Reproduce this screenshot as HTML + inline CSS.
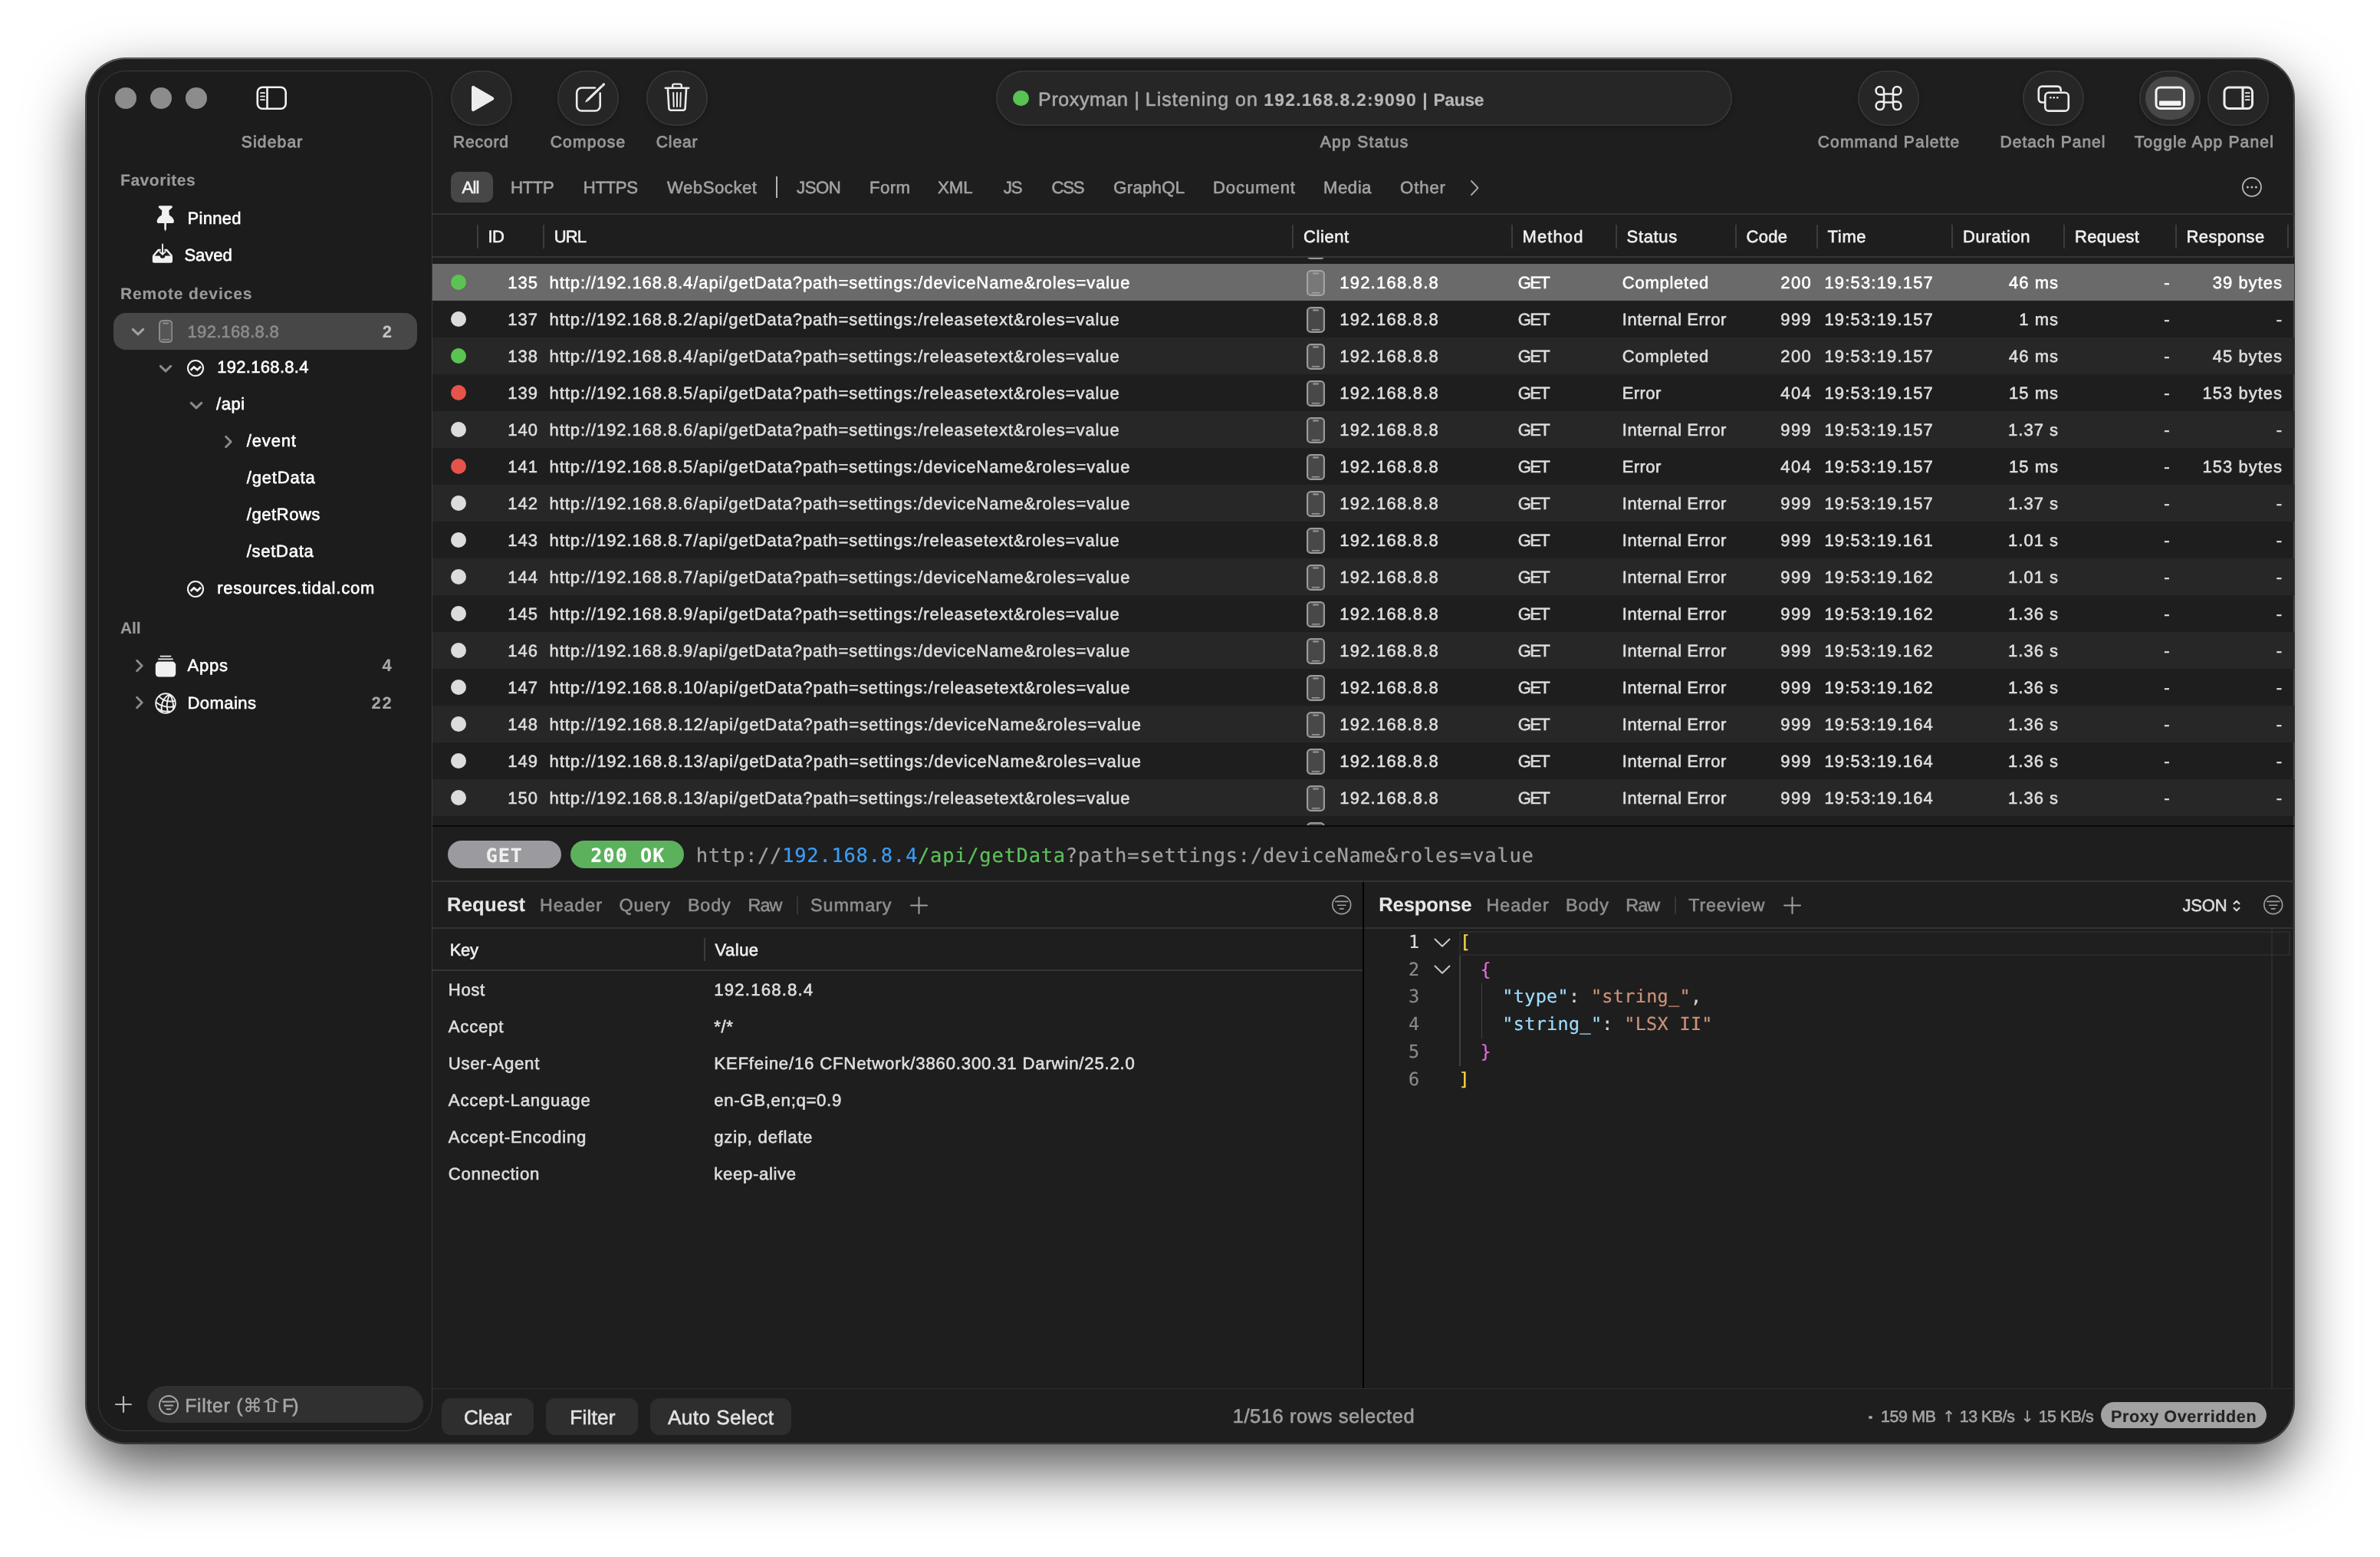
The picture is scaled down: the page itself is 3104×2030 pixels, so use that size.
<!DOCTYPE html>
<html lang="en"><head><meta charset="utf-8"><title>Proxyman</title>
<style>
html,body{margin:0;padding:0;background:#fff;}
body{width:3104px;height:2030px;position:relative;overflow:hidden;font-family:"Liberation Sans",sans-serif;}
#app div,#app span,#app svg{position:absolute;}
#app{text-rendering:geometricPrecision;will-change:transform;}
#app span{white-space:pre;-webkit-text-stroke:0.6px;}

.win{left:112px;top:76px;width:2880px;height:1806px;background:#1e1e1e;border-radius:52px;
 box-shadow:0 0 0 1px rgba(0,0,0,.7),0 34px 77px rgba(0,0,0,.66);}
.winhl{left:112px;top:76px;width:2878px;height:1804px;border-radius:52px;border:1px solid rgba(255,255,255,.2);border-top-color:rgba(255,255,255,.34);}
.side{left:128px;top:92px;width:434px;height:1772px;background:#1c1c1c;border-radius:36px;border:1px solid #3b3b3b;}

</style></head><body><div id="app">
<div class="win"></div><div class="winhl"></div>
<div class="side"></div>
<div style="left:150px;top:114px;width:28px;height:28px;background:#8c8c8c;border-radius:14px;"></div>
<div style="left:196px;top:114px;width:28px;height:28px;background:#8c8c8c;border-radius:14px;"></div>
<div style="left:242px;top:114px;width:28px;height:28px;background:#8c8c8c;border-radius:14px;"></div>
<svg style="left:334px;top:112px;" width="41" height="32" viewBox="0 0 41 32" fill="none"><rect x="1.800" y="1.800" width="36.900" height="27.900" rx="6.500" stroke="#f2f2f2" stroke-width="2.600"/><path d="M14.500 2v28" stroke="#f2f2f2" stroke-width="2.600"/><path d="M6 9.2h5M6 13.7h5M6 18.2h5" stroke="#f2f2f2" stroke-width="1.8" stroke-linecap="round"/></svg>
<span style="left:314.8px;top:172px;font-size:21px;line-height:27px;color:#9a9a9a;letter-spacing:1.18px;-webkit-text-stroke:0.85px;">Sidebar</span>
<span style="left:157.0px;top:222px;font-size:21px;line-height:27px;color:#9a9a9a;font-weight:700;letter-spacing:0.55px;-webkit-text-stroke:0.15px;">Favorites</span>
<span style="left:157.0px;top:370px;font-size:21px;line-height:27px;color:#9a9a9a;font-weight:700;letter-spacing:0.89px;-webkit-text-stroke:0.15px;">Remote devices</span>
<span style="left:157.0px;top:806px;font-size:21px;line-height:27px;color:#9a9a9a;font-weight:700;letter-spacing:-0.17px;-webkit-text-stroke:0.15px;">All</span>
<svg style="left:203px;top:267px;" width="26" height="37" viewBox="0 0 26 37" fill="none"><path d="M5.500 1.300H20.300Q21.900 1.300 21.900 2.700Q21.900 3.500 21.200 4.100L17.300 7.400L17.800 13.600Q23.900 17 23.900 22Q23.900 23.900 22 23.900H3.600Q1.700 23.900 1.700 22Q1.700 17 7.800 13.600L8.300 7.400L4.400 4.100Q3.700 3.500 3.700 2.700Q3.700 1.300 5.500 1.300Z" fill="#f0f0f0"/><path d="M11.300 23.500h2.600v8l-1.300 3.200-1.300-3.200z" fill="#f0f0f0"/></svg>
<span style="left:244.6px;top:270px;font-size:22px;line-height:29px;color:#ffffff;letter-spacing:0.3px;">Pinned</span>
<svg style="left:197px;top:316px;" width="30" height="30" viewBox="0 0 30 30" fill="none"><path d="M1.800 17.500H11.700A3.300 3.300 0 0 0 18.300 17.500H28V24.300Q28 26.800 25.500 26.800H4.300Q1.800 26.800 1.800 24.300Z" fill="#f0f0f0"/><path d="M2.900 17.800L9.700 9.900H12.600M17.400 9.900H20.300L27.100 17.800" stroke="#f0f0f0" stroke-width="2.400" stroke-linejoin="round" stroke-linecap="butt" fill="none"/><path d="M15 2.400V15.300M11.300 12.100L15 15.800L18.700 12.100" stroke="#f0f0f0" stroke-width="1.900" stroke-linecap="round" stroke-linejoin="round" fill="none"/></svg>
<span style="left:240.4px;top:318px;font-size:22px;line-height:29px;color:#ffffff;letter-spacing:-0.02px;">Saved</span>
<div style="left:148px;top:408px;width:396px;height:48px;background:#474747;border-radius:16px;"></div>
<svg style="left:169px;top:425px;" width="22" height="16" viewBox="0 0 22 16" fill="none"><path d="M4.300 4.400l6.700 6.500 6.700-6.500" stroke="#a2a2a2" stroke-width="3" stroke-linecap="round" stroke-linejoin="round"/></svg>
<svg style="left:207px;top:417.2px;" width="18.4" height="30" viewBox="0 0 18.4 30" fill="none"><rect x="1" y="1" width="16.4" height="28" rx="4.500" fill="#565656" stroke="#8c8c8c" stroke-width="2"/><path d="M6.2 4.6h6" stroke="#8c8c8c" stroke-width="2" stroke-linecap="round"/><path d="M4.7 25.8h9" stroke="#8c8c8c" stroke-width="1.600" stroke-linecap="round"/></svg>
<span style="left:244.6px;top:418px;font-size:22px;line-height:29px;color:#8c8c8c;letter-spacing:0.29px;">192.168.8.8</span>
<span style="left:498.8px;top:418px;font-size:22px;line-height:29px;color:#c6c6c6;font-weight:700;-webkit-text-stroke:0.15px;">2</span>
<svg style="left:205px;top:472.5px;" width="22" height="16" viewBox="0 0 22 16" fill="none"><path d="M4.300 4.400l6.700 6.500 6.700-6.500" stroke="#8a8a8a" stroke-width="3" stroke-linecap="round" stroke-linejoin="round"/></svg>
<svg style="left:243px;top:468.3px;" width="24" height="24" viewBox="0 0 24 24" fill="none"><circle cx="12" cy="12" r="10" stroke="#f0f0f0" stroke-width="2.100"/><path d="M5.600 14.700L9.900 10.600L14.400 14.200L18.900 9.700" stroke="#f0f0f0" stroke-width="2.800" stroke-linejoin="miter" fill="none"/></svg>
<span style="left:283.2px;top:464px;font-size:22px;line-height:29px;color:#ffffff;letter-spacing:0.31px;">192.168.8.4</span>
<svg style="left:245px;top:520.7px;" width="22" height="16" viewBox="0 0 22 16" fill="none"><path d="M4.300 4.400l6.700 6.500 6.700-6.500" stroke="#8a8a8a" stroke-width="3" stroke-linecap="round" stroke-linejoin="round"/></svg>
<span style="left:282.1px;top:512px;font-size:22px;line-height:29px;color:#ffffff;letter-spacing:0.54px;">/api</span>
<svg style="left:290px;top:564.5px;" width="16" height="22" viewBox="0 0 16 22" fill="none"><path d="M4.600 4.300l6.600 6.700-6.600 6.700" stroke="#8a8a8a" stroke-width="3" stroke-linecap="round" stroke-linejoin="round"/></svg>
<span style="left:321.8px;top:560px;font-size:22px;line-height:29px;color:#ffffff;letter-spacing:0.85px;">/event</span>
<span style="left:321.8px;top:608px;font-size:22px;line-height:29px;color:#ffffff;letter-spacing:0.83px;">/getData</span>
<span style="left:321.8px;top:656px;font-size:22px;line-height:29px;color:#ffffff;letter-spacing:0.55px;">/getRows</span>
<span style="left:321.8px;top:704px;font-size:22px;line-height:29px;color:#ffffff;letter-spacing:0.71px;">/setData</span>
<svg style="left:243px;top:755.8px;" width="24" height="24" viewBox="0 0 24 24" fill="none"><circle cx="12" cy="12" r="10" stroke="#f0f0f0" stroke-width="2.100"/><path d="M5.600 14.700L9.900 10.600L14.400 14.200L18.900 9.700" stroke="#f0f0f0" stroke-width="2.800" stroke-linejoin="miter" fill="none"/></svg>
<span style="left:283.2px;top:752px;font-size:22px;line-height:29px;color:#ffffff;letter-spacing:0.8px;">resources.tidal.com</span>
<svg style="left:173.7px;top:856.6px;" width="16" height="22" viewBox="0 0 16 22" fill="none"><path d="M4.600 4.300l6.600 6.700-6.600 6.700" stroke="#8a8a8a" stroke-width="3" stroke-linecap="round" stroke-linejoin="round"/></svg>
<svg style="left:201px;top:853px;" width="30" height="31" viewBox="0 0 30 31" fill="none"><path d="M8.300 2.600h13.400" stroke="#f0f0f0" stroke-width="1.600" stroke-linecap="round"/><path d="M6 6.300h18" stroke="#f0f0f0" stroke-width="1.800" stroke-linecap="round"/><rect x="1.800" y="9.600" width="26.400" height="20" rx="4.500" fill="#f0f0f0"/></svg>
<span style="left:244.5px;top:853px;font-size:22px;line-height:29px;color:#ffffff;letter-spacing:0.75px;">Apps</span>
<span style="left:498.6px;top:853px;font-size:22px;line-height:29px;color:#a8a8a8;font-weight:700;-webkit-text-stroke:0.15px;">4</span>
<svg style="left:173.7px;top:904.6px;" width="16" height="22" viewBox="0 0 16 22" fill="none"><path d="M4.600 4.300l6.600 6.700-6.600 6.700" stroke="#8a8a8a" stroke-width="3" stroke-linecap="round" stroke-linejoin="round"/></svg>
<svg style="left:201px;top:902px;" width="30" height="30" viewBox="0 0 30 30" fill="none"><g stroke="#f0f0f0" stroke-width="1.900" fill="none"><circle cx="15" cy="15" r="12.800"/><g transform="rotate(14 15 15)"><path d="M17.500 2.400C10 8 8.500 19 13.500 27.600M17.500 2.400C15.500 10 16.500 20 21.500 26M17.500 2.400C22.500 7 25.500 13 26.500 20.500"/><path d="M4.500 8.500C11 12.500 19 12.500 26.200 9M2.300 16.500C10 20.500 20 20 27.700 16M6 24C11 26 18 26 24 23.500"/></g></g></svg>
<span style="left:244.5px;top:902px;font-size:22px;line-height:29px;color:#ffffff;letter-spacing:0.43px;">Domains</span>
<span style="left:484.6px;top:902px;font-size:22px;line-height:29px;color:#a8a8a8;font-weight:700;letter-spacing:1.72px;-webkit-text-stroke:0.15px;">22</span>
<svg style="left:148px;top:1818px;" width="26" height="26" viewBox="0 0 26 26" fill="none"><path d="M13 3v20M3 13h20" stroke="#b4b4b4" stroke-width="2.200" stroke-linecap="round"/></svg>
<div style="left:192px;top:1807px;width:360px;height:48px;background:#303030;border-radius:24px;"></div>
<svg style="left:205.7px;top:1818px;" width="28" height="28" viewBox="0 0 28 28" fill="none"><circle cx="14" cy="14" r="12" stroke="#a8a8a8" stroke-width="2"/><path d="M5.94 9.58h16.12M8.8 14.52h10.4M11.66 19.2h4.68" stroke="#a8a8a8" stroke-width="2" stroke-linecap="round"/></svg>
<span style="left:241.2px;top:1818px;font-size:24.8px;line-height:32px;color:#a6a6a6;letter-spacing:0.71px;">Filter (</span>
<span style="left:317.3px;top:1817px;font-size:24.5px;line-height:32px;color:#a6a6a6;font-family:'DejaVu Sans', sans-serif;-webkit-text-stroke:0.2px;">⌘</span>
<span style="left:336.4px;top:1817px;font-size:25px;line-height:32px;color:#a6a6a6;font-family:'DejaVu Sans', sans-serif;-webkit-text-stroke:0.2px;transform:scaleX(1.7);transform-origin:0 50%;">⇧</span>
<span style="left:367.9px;top:1818px;font-size:24.8px;line-height:32px;color:#a6a6a6;letter-spacing:-1.81px;">F)</span>
<div style="left:587.8px;top:92px;width:80px;height:72px;border-radius:36px;background:#262626;box-shadow:inset 0 0 0 1.5px #393939,0 2px 6px rgba(0,0,0,.25);"></div>
<svg style="left:610px;top:106px;" width="40" height="44" viewBox="0 0 40 44" fill="none"><path d="M5 8.200c0-2 1.700-3 3.400-2l24.600 14.200c1.700 1 1.700 3.200 0 4.200L8.400 38.800c-1.700 1-3.400 0-3.400-2z" fill="#ececec"/></svg>
<span style="left:591.0px;top:172px;font-size:21px;line-height:27px;color:#989898;letter-spacing:0.86px;-webkit-text-stroke:0.85px;">Record</span>
<div style="left:727px;top:92px;width:80px;height:72px;border-radius:36px;background:#262626;box-shadow:inset 0 0 0 1.5px #393939,0 2px 6px rgba(0,0,0,.25);"></div>
<svg style="left:747px;top:104px;" width="46" height="46" viewBox="0 0 46 46" fill="none"><path d="M29 10.500H11.700a6.500 6.500 0 0 0-6.500 6.500V34a6.500 6.500 0 0 0 6.500 6.500h17.500a6.500 6.500 0 0 0 6.500-6.500V17.500" stroke="#ececec" stroke-width="2.600" stroke-linecap="round" fill="none"/><path d="M19.600 26.200L38.200 8.200" stroke="#ececec" stroke-width="3.200" stroke-linecap="butt"/><path d="M16 29.800l2.200-4.900 2.500 2.600z" fill="#ececec"/><path d="M39.400 7l1.100-1.100" stroke="#ececec" stroke-width="3.200" stroke-linecap="round"/></svg>
<span style="left:717.7px;top:172px;font-size:21px;line-height:27px;color:#989898;letter-spacing:1.25px;-webkit-text-stroke:0.85px;">Compose</span>
<div style="left:843px;top:92px;width:80px;height:72px;border-radius:36px;background:#262626;box-shadow:inset 0 0 0 1.5px #393939,0 2px 6px rgba(0,0,0,.25);"></div>
<svg style="left:864px;top:105px;" width="38" height="44" viewBox="0 0 38 44" fill="none"><g stroke="#ececec" stroke-linecap="round" fill="none"><path d="M3.800 9.800h30.400" stroke-width="2.600"/><path d="M13.200 9.500V6.600c0-1.300.8-2 2.100-2h7.400c1.300 0 2.100.7 2.100 2v2.900" stroke-width="2.400"/><path d="M6.900 10.500l1.500 25.500c.1 1.800 1.100 2.800 2.900 2.800h15.400c1.800 0 2.800-1 2.900-2.800l1.500-25.500" stroke-width="2.600" stroke-linejoin="round"/><path d="M14.200 16l.5 18M19 16v18M23.800 16l-.5 18" stroke-width="2"/></g></svg>
<span style="left:855.8px;top:172px;font-size:21px;line-height:27px;color:#989898;letter-spacing:0.9px;-webkit-text-stroke:0.85px;">Clear</span>
<div style="left:1299px;top:92px;width:960px;height:72px;border-radius:36px;background:#262626;box-shadow:inset 0 0 0 1.5px #393939,0 2px 6px rgba(0,0,0,.25);"></div>
<div style="left:1321px;top:117.7px;width:20.6px;height:20.6px;background:#58c354;border-radius:11px;"></div>
<span style="left:1354.1px;top:114px;font-size:25px;line-height:32px;color:#a8a8a8;letter-spacing:0.61px;">Proxyman</span>
<span style="left:1479.6px;top:114px;font-size:25px;line-height:32px;color:#a8a8a8;">|</span>
<span style="left:1493.8px;top:114px;font-size:25px;line-height:32px;color:#a8a8a8;letter-spacing:1.03px;">Listening on</span>
<span style="left:1648.2px;top:115px;font-size:22.9px;line-height:30px;color:#b6b6b6;font-weight:700;letter-spacing:1.27px;-webkit-text-stroke:0.15px;">192.168.8.2:9090</span>
<span style="left:1855.2px;top:115px;font-size:22.9px;line-height:30px;color:#b6b6b6;font-weight:700;-webkit-text-stroke:0.15px;">|</span>
<span style="left:1869.4px;top:115px;font-size:22.9px;line-height:30px;color:#b6b6b6;font-weight:700;letter-spacing:-0.31px;-webkit-text-stroke:0.15px;">Pause</span>
<span style="left:1721.8px;top:172px;font-size:21px;line-height:27px;color:#989898;letter-spacing:1.3px;-webkit-text-stroke:0.85px;">App Status</span>
<div style="left:2423px;top:92px;width:80px;height:72px;border-radius:36px;background:#262626;box-shadow:inset 0 0 0 1.5px #393939,0 2px 6px rgba(0,0,0,.25);"></div>
<svg style="left:2443px;top:109px;" width="40" height="38" viewBox="0 0 40 38" fill="none"><path d="M14 13.500h12v11H14zM14 13.500V9.200a5.200 5.200 0 1 0-5.200 5.200H14zM26 13.500V9.200a5.200 5.200 0 1 1 5.200 5.200H26zM14 24.500v4.300a5.200 5.200 0 1 1-5.200-5.200H14zM26 24.500v4.300a5.200 5.200 0 1 0 5.200-5.200H26z" stroke="#ececec" stroke-width="2.600" stroke-linejoin="round" fill="none" transform="translate(0,0)"/></svg>
<span style="left:2370.7px;top:172px;font-size:21px;line-height:27px;color:#989898;letter-spacing:1.18px;-webkit-text-stroke:0.85px;">Command Palette</span>
<div style="left:2638px;top:92px;width:80px;height:72px;border-radius:36px;background:#262626;box-shadow:inset 0 0 0 1.5px #393939,0 2px 6px rgba(0,0,0,.25);"></div>
<svg style="left:2656px;top:110px;" width="45" height="37" viewBox="0 0 45 37" fill="none"><g stroke="#ececec" stroke-width="2.600" fill="none"><path d="M10 23.500H7.500c-3 0-4.700-1.700-4.700-4.700V7.300c0-3 1.700-4.700 4.700-4.700h19.500c3 0 4.700 1.700 4.700 4.700v2"/><rect x="11.300" y="10.800" width="30.500" height="23.800" rx="4.700" fill="#262626"/></g><circle cx="18.300" cy="17.300" r="1.300" fill="#ececec"/><circle cx="22.800" cy="17.300" r="1.300" fill="#ececec"/><circle cx="27.300" cy="17.300" r="1.300" fill="#ececec"/></svg>
<span style="left:2608.6px;top:172px;font-size:21px;line-height:27px;color:#989898;letter-spacing:0.97px;-webkit-text-stroke:0.85px;">Detach Panel</span>
<div style="left:2790px;top:92px;width:80px;height:72px;border-radius:36px;background:#262626;box-shadow:inset 0 0 0 1.5px #393939,0 2px 6px rgba(0,0,0,.25);"></div>
<div style="left:2797.6px;top:99.5px;width:64.4px;height:56.5px;background:#484848;border-radius:28.2px;"></div>
<svg style="left:2810px;top:112px;" width="41" height="32" viewBox="0 0 41 32" fill="none"><rect x="2" y="2" width="36.500" height="27.500" rx="5.500" stroke="#f4f4f4" stroke-width="3"/><rect x="6" y="19.600" width="28.500" height="6.200" rx="1.200" fill="#f4f4f4"/></svg>
<div style="left:2879px;top:92px;width:80px;height:72px;border-radius:36px;background:#262626;box-shadow:inset 0 0 0 1.5px #393939,0 2px 6px rgba(0,0,0,.25);"></div>
<svg style="left:2898.5px;top:112px;" width="41" height="32" viewBox="0 0 41 32" fill="none"><rect x="2" y="2" width="36.500" height="27.500" rx="6" stroke="#ececec" stroke-width="3"/><path d="M26 2v28" stroke="#ececec" stroke-width="3"/><path d="M29.800 9.200h5M29.800 13.700h5M29.800 18.200h5" stroke="#ececec" stroke-width="1.800" stroke-linecap="round"/></svg>
<span style="left:2783.8px;top:172px;font-size:21px;line-height:27px;color:#989898;letter-spacing:1.17px;-webkit-text-stroke:0.85px;">Toggle App Panel</span>
<div style="left:588.3px;top:224.3px;width:54.6px;height:39.6px;background:#474747;border-radius:10px;"></div>
<span style="left:602.6px;top:230px;font-size:22.2px;line-height:29px;color:#f2f2f2;letter-spacing:-0.89px;">All</span>
<span style="left:666.0px;top:230px;font-size:22.2px;line-height:29px;color:#a2a2a2;letter-spacing:-0.41px;">HTTP</span>
<span style="left:760.8px;top:230px;font-size:22.2px;line-height:29px;color:#a2a2a2;letter-spacing:-0.38px;">HTTPS</span>
<span style="left:870.0px;top:230px;font-size:22.2px;line-height:29px;color:#a2a2a2;letter-spacing:0.49px;">WebSocket</span>
<div style="left:1012.3px;top:230.4px;width:2px;height:27.5px;background:#b4b4b4;"></div>
<span style="left:1039.0px;top:230px;font-size:22.2px;line-height:29px;color:#a2a2a2;letter-spacing:-0.46px;">JSON</span>
<span style="left:1134.0px;top:230px;font-size:22.2px;line-height:29px;color:#a2a2a2;letter-spacing:0.41px;">Form</span>
<span style="left:1222.9px;top:230px;font-size:22.2px;line-height:29px;color:#a2a2a2;letter-spacing:0.09px;">XML</span>
<span style="left:1308.8px;top:230px;font-size:22.2px;line-height:29px;color:#a2a2a2;letter-spacing:-1.11px;">JS</span>
<span style="left:1371.6px;top:230px;font-size:22.2px;line-height:29px;color:#a2a2a2;letter-spacing:-1.36px;">CSS</span>
<span style="left:1452.3px;top:230px;font-size:22.2px;line-height:29px;color:#a2a2a2;letter-spacing:0.24px;">GraphQL</span>
<span style="left:1582.0px;top:230px;font-size:22.2px;line-height:29px;color:#a2a2a2;letter-spacing:0.84px;">Document</span>
<span style="left:1726.0px;top:230px;font-size:22.2px;line-height:29px;color:#a2a2a2;letter-spacing:0.49px;">Media</span>
<span style="left:1826.0px;top:230px;font-size:22.2px;line-height:29px;color:#a2a2a2;letter-spacing:0.88px;">Other</span>
<svg style="left:1914px;top:232px;" width="18" height="26" viewBox="0 0 18 26" fill="none"><path d="M5 4l8.500 9L5 22" stroke="#a2a2a2" stroke-width="2" stroke-linecap="round" stroke-linejoin="round"/></svg>
<svg style="left:2922px;top:229px;" width="30" height="30" viewBox="0 0 30 30" fill="none"><circle cx="14.900" cy="14.900" r="12.100" stroke="#bdbdbd" stroke-width="1.700"/><circle cx="9.400" cy="14.900" r="1.500" fill="#bdbdbd"/><circle cx="14.900" cy="14.900" r="1.500" fill="#bdbdbd"/><circle cx="20.400" cy="14.900" r="1.500" fill="#bdbdbd"/></svg>
<div style="left:564px;top:278px;width:2428px;height:2px;background:#323232;"></div>
<div style="left:621.8px;top:292.5px;width:2px;height:31.5px;background:#3c3c3c;"></div>
<div style="left:707.9px;top:292.5px;width:2px;height:31.5px;background:#3c3c3c;"></div>
<div style="left:1684.8px;top:292.5px;width:2px;height:31.5px;background:#3c3c3c;"></div>
<div style="left:1971px;top:292.5px;width:2px;height:31.5px;background:#3c3c3c;"></div>
<div style="left:2107px;top:292.5px;width:2px;height:31.5px;background:#3c3c3c;"></div>
<div style="left:2263px;top:292.5px;width:2px;height:31.5px;background:#3c3c3c;"></div>
<div style="left:2369px;top:292.5px;width:2px;height:31.5px;background:#3c3c3c;"></div>
<div style="left:2545px;top:292.5px;width:2px;height:31.5px;background:#3c3c3c;"></div>
<div style="left:2691px;top:292.5px;width:2px;height:31.5px;background:#3c3c3c;"></div>
<div style="left:2837px;top:292.5px;width:2px;height:31.5px;background:#3c3c3c;"></div>
<div style="left:2982.7px;top:292.5px;width:2px;height:31.5px;background:#3c3c3c;"></div>
<span style="left:636.6px;top:294px;font-size:22px;line-height:29px;color:#f0f0f0;letter-spacing:-0.6px;">ID</span>
<span style="left:722.8px;top:294px;font-size:22px;line-height:29px;color:#f0f0f0;letter-spacing:-0.91px;">URL</span>
<span style="left:1699.9px;top:294px;font-size:22px;line-height:29px;color:#f0f0f0;letter-spacing:0.61px;">Client</span>
<span style="left:1985.6px;top:294px;font-size:22px;line-height:29px;color:#f0f0f0;letter-spacing:1.08px;">Method</span>
<span style="left:2121.6px;top:294px;font-size:22px;line-height:29px;color:#f0f0f0;letter-spacing:0.64px;">Status</span>
<span style="left:2277.5px;top:294px;font-size:22px;line-height:29px;color:#f0f0f0;letter-spacing:0.3px;">Code</span>
<span style="left:2383.6px;top:294px;font-size:22px;line-height:29px;color:#f0f0f0;letter-spacing:0.64px;">Time</span>
<span style="left:2560.0px;top:294px;font-size:22px;line-height:29px;color:#f0f0f0;letter-spacing:0.63px;">Duration</span>
<span style="left:2706.0px;top:294px;font-size:22px;line-height:29px;color:#f0f0f0;letter-spacing:0.34px;">Request</span>
<span style="left:2851.6px;top:294px;font-size:22px;line-height:29px;color:#f0f0f0;letter-spacing:0.36px;">Response</span>
<div style="left:564px;top:334px;width:2428px;height:2px;background:#353535;"></div>
<div style="left:564px;top:336px;width:2428px;height:8px;overflow:hidden;background:#1e1e1e"><div style="left:1139.5px;top:-40.500px;width:24px;height:34px;"></div></div>
<svg style="left:1703.5px;top:336px;" width="24" height="2.5" viewBox="0 0 24 2.500" fill="none"><rect x="1.100" y="-33" width="21.800" height="34" rx="4.500" fill="#484848" stroke="#9a9a9a" stroke-width="2.200"/></svg>
<div style="left:564px;top:344px;width:2428px;height:48px;background:#6a6a6a;"></div>
<div style="left:588px;top:358px;width:20px;height:20px;background:#5bc352;border-radius:10px;"></div>
<span style="left:662.3px;top:354px;font-size:22px;line-height:29px;color:#ffffff;letter-spacing:0.99px;">135</span>
<span style="left:716.6px;top:354px;font-size:22px;line-height:29px;color:#ffffff;letter-spacing:0.91px;">http://192.168.8.4/api/getData?path=settings:/deviceName&amp;roles=value</span>
<svg style="left:1703.5px;top:351.5px;" width="24" height="34" viewBox="0 0 24 34" fill="none"><rect x="1.1" y="1.1" width="21.8" height="31.8" rx="4.500" fill="#787878" stroke="#a2a2a2" stroke-width="2.2"/><path d="M9 4.6h6" stroke="#a2a2a2" stroke-width="2" stroke-linecap="round"/><path d="M7.5 29.8h9" stroke="#a2a2a2" stroke-width="1.600" stroke-linecap="round"/></svg>
<span style="left:1747.2px;top:354px;font-size:22px;line-height:29px;color:#ffffff;letter-spacing:1.24px;">192.168.8.8</span>
<span style="left:1979.7px;top:354px;font-size:22px;line-height:29px;color:#ffffff;letter-spacing:-1.62px;">GET</span>
<span style="left:2115.8px;top:354px;font-size:22px;line-height:29px;color:#ffffff;letter-spacing:0.75px;">Completed</span>
<span style="left:2322.3px;top:354px;font-size:22px;line-height:29px;color:#ffffff;letter-spacing:1.39px;">200</span>
<span style="left:2379.4px;top:354px;font-size:22px;line-height:29px;color:#ffffff;letter-spacing:1.18px;">19:53:19.157</span>
<span style="left:2620.1px;top:354px;font-size:22px;line-height:29px;color:#ffffff;letter-spacing:1px;">46 ms</span>
<span style="left:2822.2px;top:354px;font-size:22px;line-height:29px;color:#ffffff;">-</span>
<span style="left:2885.8px;top:354px;font-size:22px;line-height:29px;color:#ffffff;letter-spacing:1px;">39 bytes</span>
<div style="left:588px;top:406px;width:20px;height:20px;background:#dcdcdc;border-radius:10px;"></div>
<span style="left:662.3px;top:402px;font-size:22px;line-height:29px;color:#dedede;letter-spacing:0.99px;">137</span>
<span style="left:716.6px;top:402px;font-size:22px;line-height:29px;color:#dedede;letter-spacing:0.91px;">http://192.168.8.2/api/getData?path=settings:/releasetext&amp;roles=value</span>
<svg style="left:1703.5px;top:399.5px;" width="24" height="34" viewBox="0 0 24 34" fill="none"><rect x="1.1" y="1.1" width="21.8" height="31.8" rx="4.500" fill="#484848" stroke="#9a9a9a" stroke-width="2.2"/><path d="M9 4.6h6" stroke="#9a9a9a" stroke-width="2" stroke-linecap="round"/><path d="M7.5 29.8h9" stroke="#9a9a9a" stroke-width="1.600" stroke-linecap="round"/></svg>
<span style="left:1747.2px;top:402px;font-size:22px;line-height:29px;color:#dedede;letter-spacing:1.24px;">192.168.8.8</span>
<span style="left:1979.7px;top:402px;font-size:22px;line-height:29px;color:#dedede;letter-spacing:-1.62px;">GET</span>
<span style="left:2115.8px;top:402px;font-size:22px;line-height:29px;color:#dedede;letter-spacing:0.55px;">Internal Error</span>
<span style="left:2322.3px;top:402px;font-size:22px;line-height:29px;color:#dedede;letter-spacing:1.39px;">999</span>
<span style="left:2379.4px;top:402px;font-size:22px;line-height:29px;color:#dedede;letter-spacing:1.18px;">19:53:19.157</span>
<span style="left:2633.3px;top:402px;font-size:22px;line-height:29px;color:#dedede;letter-spacing:1px;">1 ms</span>
<span style="left:2822.2px;top:402px;font-size:22px;line-height:29px;color:#dedede;">-</span>
<span style="left:2968.7px;top:402px;font-size:22px;line-height:29px;color:#dedede;letter-spacing:1px;">-</span>
<div style="left:564px;top:440px;width:2428px;height:48px;background:#272727;"></div>
<div style="left:588px;top:454px;width:20px;height:20px;background:#5bc352;border-radius:10px;"></div>
<span style="left:662.3px;top:450px;font-size:22px;line-height:29px;color:#dedede;letter-spacing:0.99px;">138</span>
<span style="left:716.6px;top:450px;font-size:22px;line-height:29px;color:#dedede;letter-spacing:0.91px;">http://192.168.8.4/api/getData?path=settings:/releasetext&amp;roles=value</span>
<svg style="left:1703.5px;top:447.5px;" width="24" height="34" viewBox="0 0 24 34" fill="none"><rect x="1.1" y="1.1" width="21.8" height="31.8" rx="4.500" fill="#484848" stroke="#9a9a9a" stroke-width="2.2"/><path d="M9 4.6h6" stroke="#9a9a9a" stroke-width="2" stroke-linecap="round"/><path d="M7.5 29.8h9" stroke="#9a9a9a" stroke-width="1.600" stroke-linecap="round"/></svg>
<span style="left:1747.2px;top:450px;font-size:22px;line-height:29px;color:#dedede;letter-spacing:1.24px;">192.168.8.8</span>
<span style="left:1979.7px;top:450px;font-size:22px;line-height:29px;color:#dedede;letter-spacing:-1.62px;">GET</span>
<span style="left:2115.8px;top:450px;font-size:22px;line-height:29px;color:#dedede;letter-spacing:0.75px;">Completed</span>
<span style="left:2322.3px;top:450px;font-size:22px;line-height:29px;color:#dedede;letter-spacing:1.39px;">200</span>
<span style="left:2379.4px;top:450px;font-size:22px;line-height:29px;color:#dedede;letter-spacing:1.18px;">19:53:19.157</span>
<span style="left:2620.1px;top:450px;font-size:22px;line-height:29px;color:#dedede;letter-spacing:1px;">46 ms</span>
<span style="left:2822.2px;top:450px;font-size:22px;line-height:29px;color:#dedede;">-</span>
<span style="left:2885.8px;top:450px;font-size:22px;line-height:29px;color:#dedede;letter-spacing:1px;">45 bytes</span>
<div style="left:588px;top:502px;width:20px;height:20px;background:#e5534b;border-radius:10px;"></div>
<span style="left:662.3px;top:498px;font-size:22px;line-height:29px;color:#dedede;letter-spacing:0.99px;">139</span>
<span style="left:716.6px;top:498px;font-size:22px;line-height:29px;color:#dedede;letter-spacing:0.91px;">http://192.168.8.5/api/getData?path=settings:/releasetext&amp;roles=value</span>
<svg style="left:1703.5px;top:495.5px;" width="24" height="34" viewBox="0 0 24 34" fill="none"><rect x="1.1" y="1.1" width="21.8" height="31.8" rx="4.500" fill="#484848" stroke="#9a9a9a" stroke-width="2.2"/><path d="M9 4.6h6" stroke="#9a9a9a" stroke-width="2" stroke-linecap="round"/><path d="M7.5 29.8h9" stroke="#9a9a9a" stroke-width="1.600" stroke-linecap="round"/></svg>
<span style="left:1747.2px;top:498px;font-size:22px;line-height:29px;color:#dedede;letter-spacing:1.24px;">192.168.8.8</span>
<span style="left:1979.7px;top:498px;font-size:22px;line-height:29px;color:#dedede;letter-spacing:-1.62px;">GET</span>
<span style="left:2115.8px;top:498px;font-size:22px;line-height:29px;color:#dedede;letter-spacing:0.4px;">Error</span>
<span style="left:2322.3px;top:498px;font-size:22px;line-height:29px;color:#dedede;letter-spacing:1.39px;">404</span>
<span style="left:2379.4px;top:498px;font-size:22px;line-height:29px;color:#dedede;letter-spacing:1.18px;">19:53:19.157</span>
<span style="left:2620.1px;top:498px;font-size:22px;line-height:29px;color:#dedede;letter-spacing:1px;">15 ms</span>
<span style="left:2822.2px;top:498px;font-size:22px;line-height:29px;color:#dedede;">-</span>
<span style="left:2872.6px;top:498px;font-size:22px;line-height:29px;color:#dedede;letter-spacing:1px;">153 bytes</span>
<div style="left:564px;top:536px;width:2428px;height:48px;background:#272727;"></div>
<div style="left:588px;top:550px;width:20px;height:20px;background:#dcdcdc;border-radius:10px;"></div>
<span style="left:662.3px;top:546px;font-size:22px;line-height:29px;color:#dedede;letter-spacing:0.99px;">140</span>
<span style="left:716.6px;top:546px;font-size:22px;line-height:29px;color:#dedede;letter-spacing:0.91px;">http://192.168.8.6/api/getData?path=settings:/releasetext&amp;roles=value</span>
<svg style="left:1703.5px;top:543.5px;" width="24" height="34" viewBox="0 0 24 34" fill="none"><rect x="1.1" y="1.1" width="21.8" height="31.8" rx="4.500" fill="#484848" stroke="#9a9a9a" stroke-width="2.2"/><path d="M9 4.6h6" stroke="#9a9a9a" stroke-width="2" stroke-linecap="round"/><path d="M7.5 29.8h9" stroke="#9a9a9a" stroke-width="1.600" stroke-linecap="round"/></svg>
<span style="left:1747.2px;top:546px;font-size:22px;line-height:29px;color:#dedede;letter-spacing:1.24px;">192.168.8.8</span>
<span style="left:1979.7px;top:546px;font-size:22px;line-height:29px;color:#dedede;letter-spacing:-1.62px;">GET</span>
<span style="left:2115.8px;top:546px;font-size:22px;line-height:29px;color:#dedede;letter-spacing:0.55px;">Internal Error</span>
<span style="left:2322.3px;top:546px;font-size:22px;line-height:29px;color:#dedede;letter-spacing:1.39px;">999</span>
<span style="left:2379.4px;top:546px;font-size:22px;line-height:29px;color:#dedede;letter-spacing:1.18px;">19:53:19.157</span>
<span style="left:2619.1px;top:546px;font-size:22px;line-height:29px;color:#dedede;letter-spacing:1px;">1.37 s</span>
<span style="left:2822.2px;top:546px;font-size:22px;line-height:29px;color:#dedede;">-</span>
<span style="left:2968.7px;top:546px;font-size:22px;line-height:29px;color:#dedede;letter-spacing:1px;">-</span>
<div style="left:588px;top:598px;width:20px;height:20px;background:#e5534b;border-radius:10px;"></div>
<span style="left:662.3px;top:594px;font-size:22px;line-height:29px;color:#dedede;letter-spacing:0.99px;">141</span>
<span style="left:716.6px;top:594px;font-size:22px;line-height:29px;color:#dedede;letter-spacing:0.91px;">http://192.168.8.5/api/getData?path=settings:/deviceName&amp;roles=value</span>
<svg style="left:1703.5px;top:591.5px;" width="24" height="34" viewBox="0 0 24 34" fill="none"><rect x="1.1" y="1.1" width="21.8" height="31.8" rx="4.500" fill="#484848" stroke="#9a9a9a" stroke-width="2.2"/><path d="M9 4.6h6" stroke="#9a9a9a" stroke-width="2" stroke-linecap="round"/><path d="M7.5 29.8h9" stroke="#9a9a9a" stroke-width="1.600" stroke-linecap="round"/></svg>
<span style="left:1747.2px;top:594px;font-size:22px;line-height:29px;color:#dedede;letter-spacing:1.24px;">192.168.8.8</span>
<span style="left:1979.7px;top:594px;font-size:22px;line-height:29px;color:#dedede;letter-spacing:-1.62px;">GET</span>
<span style="left:2115.8px;top:594px;font-size:22px;line-height:29px;color:#dedede;letter-spacing:0.4px;">Error</span>
<span style="left:2322.3px;top:594px;font-size:22px;line-height:29px;color:#dedede;letter-spacing:1.39px;">404</span>
<span style="left:2379.4px;top:594px;font-size:22px;line-height:29px;color:#dedede;letter-spacing:1.18px;">19:53:19.157</span>
<span style="left:2620.1px;top:594px;font-size:22px;line-height:29px;color:#dedede;letter-spacing:1px;">15 ms</span>
<span style="left:2822.2px;top:594px;font-size:22px;line-height:29px;color:#dedede;">-</span>
<span style="left:2872.6px;top:594px;font-size:22px;line-height:29px;color:#dedede;letter-spacing:1px;">153 bytes</span>
<div style="left:564px;top:632px;width:2428px;height:48px;background:#272727;"></div>
<div style="left:588px;top:646px;width:20px;height:20px;background:#dcdcdc;border-radius:10px;"></div>
<span style="left:662.3px;top:642px;font-size:22px;line-height:29px;color:#dedede;letter-spacing:0.99px;">142</span>
<span style="left:716.6px;top:642px;font-size:22px;line-height:29px;color:#dedede;letter-spacing:0.91px;">http://192.168.8.6/api/getData?path=settings:/deviceName&amp;roles=value</span>
<svg style="left:1703.5px;top:639.5px;" width="24" height="34" viewBox="0 0 24 34" fill="none"><rect x="1.1" y="1.1" width="21.8" height="31.8" rx="4.500" fill="#484848" stroke="#9a9a9a" stroke-width="2.2"/><path d="M9 4.6h6" stroke="#9a9a9a" stroke-width="2" stroke-linecap="round"/><path d="M7.5 29.8h9" stroke="#9a9a9a" stroke-width="1.600" stroke-linecap="round"/></svg>
<span style="left:1747.2px;top:642px;font-size:22px;line-height:29px;color:#dedede;letter-spacing:1.24px;">192.168.8.8</span>
<span style="left:1979.7px;top:642px;font-size:22px;line-height:29px;color:#dedede;letter-spacing:-1.62px;">GET</span>
<span style="left:2115.8px;top:642px;font-size:22px;line-height:29px;color:#dedede;letter-spacing:0.55px;">Internal Error</span>
<span style="left:2322.3px;top:642px;font-size:22px;line-height:29px;color:#dedede;letter-spacing:1.39px;">999</span>
<span style="left:2379.4px;top:642px;font-size:22px;line-height:29px;color:#dedede;letter-spacing:1.18px;">19:53:19.157</span>
<span style="left:2619.1px;top:642px;font-size:22px;line-height:29px;color:#dedede;letter-spacing:1px;">1.37 s</span>
<span style="left:2822.2px;top:642px;font-size:22px;line-height:29px;color:#dedede;">-</span>
<span style="left:2968.7px;top:642px;font-size:22px;line-height:29px;color:#dedede;letter-spacing:1px;">-</span>
<div style="left:588px;top:694px;width:20px;height:20px;background:#dcdcdc;border-radius:10px;"></div>
<span style="left:662.3px;top:690px;font-size:22px;line-height:29px;color:#dedede;letter-spacing:0.99px;">143</span>
<span style="left:716.6px;top:690px;font-size:22px;line-height:29px;color:#dedede;letter-spacing:0.91px;">http://192.168.8.7/api/getData?path=settings:/releasetext&amp;roles=value</span>
<svg style="left:1703.5px;top:687.5px;" width="24" height="34" viewBox="0 0 24 34" fill="none"><rect x="1.1" y="1.1" width="21.8" height="31.8" rx="4.500" fill="#484848" stroke="#9a9a9a" stroke-width="2.2"/><path d="M9 4.6h6" stroke="#9a9a9a" stroke-width="2" stroke-linecap="round"/><path d="M7.5 29.8h9" stroke="#9a9a9a" stroke-width="1.600" stroke-linecap="round"/></svg>
<span style="left:1747.2px;top:690px;font-size:22px;line-height:29px;color:#dedede;letter-spacing:1.24px;">192.168.8.8</span>
<span style="left:1979.7px;top:690px;font-size:22px;line-height:29px;color:#dedede;letter-spacing:-1.62px;">GET</span>
<span style="left:2115.8px;top:690px;font-size:22px;line-height:29px;color:#dedede;letter-spacing:0.55px;">Internal Error</span>
<span style="left:2322.3px;top:690px;font-size:22px;line-height:29px;color:#dedede;letter-spacing:1.39px;">999</span>
<span style="left:2379.4px;top:690px;font-size:22px;line-height:29px;color:#dedede;letter-spacing:1.18px;">19:53:19.161</span>
<span style="left:2619.1px;top:690px;font-size:22px;line-height:29px;color:#dedede;letter-spacing:1px;">1.01 s</span>
<span style="left:2822.2px;top:690px;font-size:22px;line-height:29px;color:#dedede;">-</span>
<span style="left:2968.7px;top:690px;font-size:22px;line-height:29px;color:#dedede;letter-spacing:1px;">-</span>
<div style="left:564px;top:728px;width:2428px;height:48px;background:#272727;"></div>
<div style="left:588px;top:742px;width:20px;height:20px;background:#dcdcdc;border-radius:10px;"></div>
<span style="left:662.3px;top:738px;font-size:22px;line-height:29px;color:#dedede;letter-spacing:0.99px;">144</span>
<span style="left:716.6px;top:738px;font-size:22px;line-height:29px;color:#dedede;letter-spacing:0.91px;">http://192.168.8.7/api/getData?path=settings:/deviceName&amp;roles=value</span>
<svg style="left:1703.5px;top:735.5px;" width="24" height="34" viewBox="0 0 24 34" fill="none"><rect x="1.1" y="1.1" width="21.8" height="31.8" rx="4.500" fill="#484848" stroke="#9a9a9a" stroke-width="2.2"/><path d="M9 4.6h6" stroke="#9a9a9a" stroke-width="2" stroke-linecap="round"/><path d="M7.5 29.8h9" stroke="#9a9a9a" stroke-width="1.600" stroke-linecap="round"/></svg>
<span style="left:1747.2px;top:738px;font-size:22px;line-height:29px;color:#dedede;letter-spacing:1.24px;">192.168.8.8</span>
<span style="left:1979.7px;top:738px;font-size:22px;line-height:29px;color:#dedede;letter-spacing:-1.62px;">GET</span>
<span style="left:2115.8px;top:738px;font-size:22px;line-height:29px;color:#dedede;letter-spacing:0.55px;">Internal Error</span>
<span style="left:2322.3px;top:738px;font-size:22px;line-height:29px;color:#dedede;letter-spacing:1.39px;">999</span>
<span style="left:2379.4px;top:738px;font-size:22px;line-height:29px;color:#dedede;letter-spacing:1.18px;">19:53:19.162</span>
<span style="left:2619.1px;top:738px;font-size:22px;line-height:29px;color:#dedede;letter-spacing:1px;">1.01 s</span>
<span style="left:2822.2px;top:738px;font-size:22px;line-height:29px;color:#dedede;">-</span>
<span style="left:2968.7px;top:738px;font-size:22px;line-height:29px;color:#dedede;letter-spacing:1px;">-</span>
<div style="left:588px;top:790px;width:20px;height:20px;background:#dcdcdc;border-radius:10px;"></div>
<span style="left:662.3px;top:786px;font-size:22px;line-height:29px;color:#dedede;letter-spacing:0.99px;">145</span>
<span style="left:716.6px;top:786px;font-size:22px;line-height:29px;color:#dedede;letter-spacing:0.91px;">http://192.168.8.9/api/getData?path=settings:/releasetext&amp;roles=value</span>
<svg style="left:1703.5px;top:783.5px;" width="24" height="34" viewBox="0 0 24 34" fill="none"><rect x="1.1" y="1.1" width="21.8" height="31.8" rx="4.500" fill="#484848" stroke="#9a9a9a" stroke-width="2.2"/><path d="M9 4.6h6" stroke="#9a9a9a" stroke-width="2" stroke-linecap="round"/><path d="M7.5 29.8h9" stroke="#9a9a9a" stroke-width="1.600" stroke-linecap="round"/></svg>
<span style="left:1747.2px;top:786px;font-size:22px;line-height:29px;color:#dedede;letter-spacing:1.24px;">192.168.8.8</span>
<span style="left:1979.7px;top:786px;font-size:22px;line-height:29px;color:#dedede;letter-spacing:-1.62px;">GET</span>
<span style="left:2115.8px;top:786px;font-size:22px;line-height:29px;color:#dedede;letter-spacing:0.55px;">Internal Error</span>
<span style="left:2322.3px;top:786px;font-size:22px;line-height:29px;color:#dedede;letter-spacing:1.39px;">999</span>
<span style="left:2379.4px;top:786px;font-size:22px;line-height:29px;color:#dedede;letter-spacing:1.18px;">19:53:19.162</span>
<span style="left:2619.1px;top:786px;font-size:22px;line-height:29px;color:#dedede;letter-spacing:1px;">1.36 s</span>
<span style="left:2822.2px;top:786px;font-size:22px;line-height:29px;color:#dedede;">-</span>
<span style="left:2968.7px;top:786px;font-size:22px;line-height:29px;color:#dedede;letter-spacing:1px;">-</span>
<div style="left:564px;top:824px;width:2428px;height:48px;background:#272727;"></div>
<div style="left:588px;top:838px;width:20px;height:20px;background:#dcdcdc;border-radius:10px;"></div>
<span style="left:662.3px;top:834px;font-size:22px;line-height:29px;color:#dedede;letter-spacing:0.99px;">146</span>
<span style="left:716.6px;top:834px;font-size:22px;line-height:29px;color:#dedede;letter-spacing:0.91px;">http://192.168.8.9/api/getData?path=settings:/deviceName&amp;roles=value</span>
<svg style="left:1703.5px;top:831.5px;" width="24" height="34" viewBox="0 0 24 34" fill="none"><rect x="1.1" y="1.1" width="21.8" height="31.8" rx="4.500" fill="#484848" stroke="#9a9a9a" stroke-width="2.2"/><path d="M9 4.6h6" stroke="#9a9a9a" stroke-width="2" stroke-linecap="round"/><path d="M7.5 29.8h9" stroke="#9a9a9a" stroke-width="1.600" stroke-linecap="round"/></svg>
<span style="left:1747.2px;top:834px;font-size:22px;line-height:29px;color:#dedede;letter-spacing:1.24px;">192.168.8.8</span>
<span style="left:1979.7px;top:834px;font-size:22px;line-height:29px;color:#dedede;letter-spacing:-1.62px;">GET</span>
<span style="left:2115.8px;top:834px;font-size:22px;line-height:29px;color:#dedede;letter-spacing:0.55px;">Internal Error</span>
<span style="left:2322.3px;top:834px;font-size:22px;line-height:29px;color:#dedede;letter-spacing:1.39px;">999</span>
<span style="left:2379.4px;top:834px;font-size:22px;line-height:29px;color:#dedede;letter-spacing:1.18px;">19:53:19.162</span>
<span style="left:2619.1px;top:834px;font-size:22px;line-height:29px;color:#dedede;letter-spacing:1px;">1.36 s</span>
<span style="left:2822.2px;top:834px;font-size:22px;line-height:29px;color:#dedede;">-</span>
<span style="left:2968.7px;top:834px;font-size:22px;line-height:29px;color:#dedede;letter-spacing:1px;">-</span>
<div style="left:588px;top:886px;width:20px;height:20px;background:#dcdcdc;border-radius:10px;"></div>
<span style="left:662.3px;top:882px;font-size:22px;line-height:29px;color:#dedede;letter-spacing:0.99px;">147</span>
<span style="left:716.6px;top:882px;font-size:22px;line-height:29px;color:#dedede;letter-spacing:0.92px;">http://192.168.8.10/api/getData?path=settings:/releasetext&amp;roles=value</span>
<svg style="left:1703.5px;top:879.5px;" width="24" height="34" viewBox="0 0 24 34" fill="none"><rect x="1.1" y="1.1" width="21.8" height="31.8" rx="4.500" fill="#484848" stroke="#9a9a9a" stroke-width="2.2"/><path d="M9 4.6h6" stroke="#9a9a9a" stroke-width="2" stroke-linecap="round"/><path d="M7.5 29.8h9" stroke="#9a9a9a" stroke-width="1.600" stroke-linecap="round"/></svg>
<span style="left:1747.2px;top:882px;font-size:22px;line-height:29px;color:#dedede;letter-spacing:1.24px;">192.168.8.8</span>
<span style="left:1979.7px;top:882px;font-size:22px;line-height:29px;color:#dedede;letter-spacing:-1.62px;">GET</span>
<span style="left:2115.8px;top:882px;font-size:22px;line-height:29px;color:#dedede;letter-spacing:0.55px;">Internal Error</span>
<span style="left:2322.3px;top:882px;font-size:22px;line-height:29px;color:#dedede;letter-spacing:1.39px;">999</span>
<span style="left:2379.4px;top:882px;font-size:22px;line-height:29px;color:#dedede;letter-spacing:1.18px;">19:53:19.162</span>
<span style="left:2619.1px;top:882px;font-size:22px;line-height:29px;color:#dedede;letter-spacing:1px;">1.36 s</span>
<span style="left:2822.2px;top:882px;font-size:22px;line-height:29px;color:#dedede;">-</span>
<span style="left:2968.7px;top:882px;font-size:22px;line-height:29px;color:#dedede;letter-spacing:1px;">-</span>
<div style="left:564px;top:920px;width:2428px;height:48px;background:#272727;"></div>
<div style="left:588px;top:934px;width:20px;height:20px;background:#dcdcdc;border-radius:10px;"></div>
<span style="left:662.3px;top:930px;font-size:22px;line-height:29px;color:#dedede;letter-spacing:0.99px;">148</span>
<span style="left:716.6px;top:930px;font-size:22px;line-height:29px;color:#dedede;letter-spacing:0.93px;">http://192.168.8.12/api/getData?path=settings:/deviceName&amp;roles=value</span>
<svg style="left:1703.5px;top:927.5px;" width="24" height="34" viewBox="0 0 24 34" fill="none"><rect x="1.1" y="1.1" width="21.8" height="31.8" rx="4.500" fill="#484848" stroke="#9a9a9a" stroke-width="2.2"/><path d="M9 4.6h6" stroke="#9a9a9a" stroke-width="2" stroke-linecap="round"/><path d="M7.5 29.8h9" stroke="#9a9a9a" stroke-width="1.600" stroke-linecap="round"/></svg>
<span style="left:1747.2px;top:930px;font-size:22px;line-height:29px;color:#dedede;letter-spacing:1.24px;">192.168.8.8</span>
<span style="left:1979.7px;top:930px;font-size:22px;line-height:29px;color:#dedede;letter-spacing:-1.62px;">GET</span>
<span style="left:2115.8px;top:930px;font-size:22px;line-height:29px;color:#dedede;letter-spacing:0.55px;">Internal Error</span>
<span style="left:2322.3px;top:930px;font-size:22px;line-height:29px;color:#dedede;letter-spacing:1.39px;">999</span>
<span style="left:2379.4px;top:930px;font-size:22px;line-height:29px;color:#dedede;letter-spacing:1.18px;">19:53:19.164</span>
<span style="left:2619.1px;top:930px;font-size:22px;line-height:29px;color:#dedede;letter-spacing:1px;">1.36 s</span>
<span style="left:2822.2px;top:930px;font-size:22px;line-height:29px;color:#dedede;">-</span>
<span style="left:2968.7px;top:930px;font-size:22px;line-height:29px;color:#dedede;letter-spacing:1px;">-</span>
<div style="left:588px;top:982px;width:20px;height:20px;background:#dcdcdc;border-radius:10px;"></div>
<span style="left:662.3px;top:978px;font-size:22px;line-height:29px;color:#dedede;letter-spacing:0.99px;">149</span>
<span style="left:716.6px;top:978px;font-size:22px;line-height:29px;color:#dedede;letter-spacing:0.93px;">http://192.168.8.13/api/getData?path=settings:/deviceName&amp;roles=value</span>
<svg style="left:1703.5px;top:975.5px;" width="24" height="34" viewBox="0 0 24 34" fill="none"><rect x="1.1" y="1.1" width="21.8" height="31.8" rx="4.500" fill="#484848" stroke="#9a9a9a" stroke-width="2.2"/><path d="M9 4.6h6" stroke="#9a9a9a" stroke-width="2" stroke-linecap="round"/><path d="M7.5 29.8h9" stroke="#9a9a9a" stroke-width="1.600" stroke-linecap="round"/></svg>
<span style="left:1747.2px;top:978px;font-size:22px;line-height:29px;color:#dedede;letter-spacing:1.24px;">192.168.8.8</span>
<span style="left:1979.7px;top:978px;font-size:22px;line-height:29px;color:#dedede;letter-spacing:-1.62px;">GET</span>
<span style="left:2115.8px;top:978px;font-size:22px;line-height:29px;color:#dedede;letter-spacing:0.55px;">Internal Error</span>
<span style="left:2322.3px;top:978px;font-size:22px;line-height:29px;color:#dedede;letter-spacing:1.39px;">999</span>
<span style="left:2379.4px;top:978px;font-size:22px;line-height:29px;color:#dedede;letter-spacing:1.18px;">19:53:19.164</span>
<span style="left:2619.1px;top:978px;font-size:22px;line-height:29px;color:#dedede;letter-spacing:1px;">1.36 s</span>
<span style="left:2822.2px;top:978px;font-size:22px;line-height:29px;color:#dedede;">-</span>
<span style="left:2968.7px;top:978px;font-size:22px;line-height:29px;color:#dedede;letter-spacing:1px;">-</span>
<div style="left:564px;top:1016px;width:2428px;height:48px;background:#272727;"></div>
<div style="left:588px;top:1030px;width:20px;height:20px;background:#dcdcdc;border-radius:10px;"></div>
<span style="left:662.3px;top:1026px;font-size:22px;line-height:29px;color:#dedede;letter-spacing:0.99px;">150</span>
<span style="left:716.6px;top:1026px;font-size:22px;line-height:29px;color:#dedede;letter-spacing:0.92px;">http://192.168.8.13/api/getData?path=settings:/releasetext&amp;roles=value</span>
<svg style="left:1703.5px;top:1023.5px;" width="24" height="34" viewBox="0 0 24 34" fill="none"><rect x="1.1" y="1.1" width="21.8" height="31.8" rx="4.500" fill="#484848" stroke="#9a9a9a" stroke-width="2.2"/><path d="M9 4.6h6" stroke="#9a9a9a" stroke-width="2" stroke-linecap="round"/><path d="M7.5 29.8h9" stroke="#9a9a9a" stroke-width="1.600" stroke-linecap="round"/></svg>
<span style="left:1747.2px;top:1026px;font-size:22px;line-height:29px;color:#dedede;letter-spacing:1.24px;">192.168.8.8</span>
<span style="left:1979.7px;top:1026px;font-size:22px;line-height:29px;color:#dedede;letter-spacing:-1.62px;">GET</span>
<span style="left:2115.8px;top:1026px;font-size:22px;line-height:29px;color:#dedede;letter-spacing:0.55px;">Internal Error</span>
<span style="left:2322.3px;top:1026px;font-size:22px;line-height:29px;color:#dedede;letter-spacing:1.39px;">999</span>
<span style="left:2379.4px;top:1026px;font-size:22px;line-height:29px;color:#dedede;letter-spacing:1.18px;">19:53:19.164</span>
<span style="left:2619.1px;top:1026px;font-size:22px;line-height:29px;color:#dedede;letter-spacing:1px;">1.36 s</span>
<span style="left:2822.2px;top:1026px;font-size:22px;line-height:29px;color:#dedede;">-</span>
<span style="left:2968.7px;top:1026px;font-size:22px;line-height:29px;color:#dedede;letter-spacing:1px;">-</span>
<svg style="left:1703.5px;top:1071.5px;" width="24" height="4.5" viewBox="0 0 24 4.500" fill="none"><rect x="1.100" y="1.100" width="21.800" height="34" rx="4.500" fill="#484848" stroke="#9a9a9a" stroke-width="2.200"/></svg>
<div style="left:564px;top:1076px;width:2428px;height:2.2px;background:#090909;"></div>
<div style="left:584px;top:1096px;width:148px;height:36.2px;background:#9b9a9f;border-radius:18.1px;"></div>
<span style="left:633.8px;top:1100px;font-size:25px;line-height:32px;color:#efefef;font-weight:700;font-family:'DejaVu Sans Mono', monospace;letter-spacing:0.87px;-webkit-text-stroke:0.15px;">GET</span>
<div style="left:743.7px;top:1096px;width:148.5px;height:36.2px;background:#5bb15c;border-radius:18.1px;"></div>
<span style="left:770.3px;top:1100px;font-size:25px;line-height:32px;color:#ffffff;font-weight:700;font-family:'DejaVu Sans Mono', monospace;letter-spacing:1.12px;-webkit-text-stroke:0.15px;">200 OK</span>
<span style="left:907.7px;top:1100px;font-size:25.5px;line-height:33px;color:#a2a2a2;font-family:'DejaVu Sans Mono', monospace;letter-spacing:0.72px;-webkit-text-stroke:0.2px;">http://</span>
<span style="left:1020.2px;top:1100px;font-size:25.5px;line-height:33px;color:#3b9df6;font-family:'DejaVu Sans Mono', monospace;letter-spacing:0.72px;-webkit-text-stroke:0.2px;">192.168.8.4</span>
<span style="left:1197.0px;top:1100px;font-size:25.5px;line-height:33px;color:#5cc05a;font-family:'DejaVu Sans Mono', monospace;letter-spacing:0.72px;-webkit-text-stroke:0.2px;">/api/getData</span>
<span style="left:1389.8px;top:1100px;font-size:25.5px;line-height:33px;color:#a2a2a2;font-family:'DejaVu Sans Mono', monospace;letter-spacing:0.72px;-webkit-text-stroke:0.2px;">?path=settings:/deviceName&amp;roles=value</span>
<div style="left:564px;top:1147.5px;width:2428px;height:2px;background:#323232;"></div>
<span style="left:583.0px;top:1164px;font-size:25.6px;line-height:33px;color:#e6e6e6;font-weight:700;letter-spacing:0.19px;-webkit-text-stroke:0.15px;">Request</span>
<span style="left:703.9px;top:1165px;font-size:23.3px;line-height:30px;color:#8e8e8e;letter-spacing:0.92px;">Header</span>
<span style="left:807.6px;top:1165px;font-size:23.3px;line-height:30px;color:#8e8e8e;letter-spacing:0.74px;">Query</span>
<span style="left:896.9px;top:1165px;font-size:23.3px;line-height:30px;color:#8e8e8e;letter-spacing:0.9px;">Body</span>
<span style="left:975.6px;top:1165px;font-size:23.3px;line-height:30px;color:#8e8e8e;letter-spacing:-0.9px;">Raw</span>
<div style="left:1039.4px;top:1169px;width:2px;height:22.6px;background:#363636;"></div>
<span style="left:1057.1px;top:1165px;font-size:23.3px;line-height:30px;color:#8e8e8e;letter-spacing:0.94px;">Summary</span>
<svg style="left:1186.5px;top:1168.5px;" width="23" height="23" viewBox="0 0 23 23" fill="none"><path d="M11.5 1v21M1 11.5h21" stroke="#a0a0a0" stroke-width="2" stroke-linecap="round"/></svg>
<svg style="left:1735.75px;top:1166.25px;" width="27.5" height="27.5" viewBox="0 0 27.5 27.5" fill="none"><circle cx="13.75" cy="13.75" r="11.9" stroke="#9c9c9c" stroke-width="1.7"/><path d="M5.845 9.415h15.81M8.65 14.26h10.2M11.455 18.85h4.59" stroke="#9c9c9c" stroke-width="1.7" stroke-linecap="round"/></svg>
<div style="left:564px;top:1209px;width:1213px;height:2px;background:#323232;"></div>
<span style="left:586.7px;top:1224px;font-size:22px;line-height:29px;color:#f0f0f0;letter-spacing:-0.36px;">Key</span>
<div style="left:918px;top:1222.7px;width:2px;height:30.7px;background:#3c3c3c;"></div>
<span style="left:932.6px;top:1224px;font-size:22px;line-height:29px;color:#f0f0f0;letter-spacing:0.46px;">Value</span>
<div style="left:564px;top:1263.8px;width:1213px;height:2px;background:#353535;"></div>
<span style="left:584.8px;top:1276px;font-size:22.2px;line-height:29px;color:#dedede;letter-spacing:0.59px;">Host</span>
<span style="left:931.3px;top:1276px;font-size:22.2px;line-height:29px;color:#dedede;letter-spacing:1.17px;">192.168.8.4</span>
<span style="left:584.8px;top:1324px;font-size:22.2px;line-height:29px;color:#dedede;letter-spacing:0.75px;">Accept</span>
<span style="left:931.3px;top:1324px;font-size:22.2px;line-height:29px;color:#dedede;letter-spacing:0.63px;">*/*</span>
<span style="left:584.8px;top:1372px;font-size:22.2px;line-height:29px;color:#dedede;letter-spacing:0.7px;">User-Agent</span>
<span style="left:931.3px;top:1372px;font-size:22.2px;line-height:29px;color:#dedede;letter-spacing:0.8px;">KEFfeine/16 CFNetwork/3860.300.31 Darwin/25.2.0</span>
<span style="left:584.8px;top:1420px;font-size:22.2px;line-height:29px;color:#dedede;letter-spacing:0.79px;">Accept-Language</span>
<span style="left:931.3px;top:1420px;font-size:22.2px;line-height:29px;color:#dedede;letter-spacing:0.67px;">en-GB,en;q=0.9</span>
<span style="left:584.8px;top:1468px;font-size:22.2px;line-height:29px;color:#dedede;letter-spacing:0.85px;">Accept-Encoding</span>
<span style="left:931.3px;top:1468px;font-size:22.2px;line-height:29px;color:#dedede;letter-spacing:0.71px;">gzip, deflate</span>
<span style="left:584.8px;top:1516px;font-size:22.2px;line-height:29px;color:#dedede;letter-spacing:0.69px;">Connection</span>
<span style="left:931.3px;top:1516px;font-size:22.2px;line-height:29px;color:#dedede;letter-spacing:0.63px;">keep-alive</span>
<div style="left:1776.8px;top:1149.5px;width:2.2px;height:661px;background:#000000;"></div>
<span style="left:1798.2px;top:1164px;font-size:25.6px;line-height:33px;color:#e6e6e6;font-weight:700;letter-spacing:-0.13px;-webkit-text-stroke:0.15px;">Response</span>
<span style="left:1938.4px;top:1165px;font-size:23.3px;line-height:30px;color:#8e8e8e;letter-spacing:0.98px;">Header</span>
<span style="left:2042.0px;top:1165px;font-size:23.3px;line-height:30px;color:#8e8e8e;letter-spacing:0.9px;">Body</span>
<span style="left:2120.2px;top:1165px;font-size:23.3px;line-height:30px;color:#8e8e8e;letter-spacing:-0.8px;">Raw</span>
<div style="left:2184px;top:1169px;width:2px;height:22.6px;background:#363636;"></div>
<span style="left:2202.3px;top:1165px;font-size:23.3px;line-height:30px;color:#8e8e8e;letter-spacing:0.76px;">Treeview</span>
<svg style="left:2325.5px;top:1168.5px;" width="23" height="23" viewBox="0 0 23 23" fill="none"><path d="M11.5 1v21M1 11.5h21" stroke="#a0a0a0" stroke-width="2" stroke-linecap="round"/></svg>
<span style="left:2846.4px;top:1166px;font-size:22px;line-height:29px;color:#dcdcdc;letter-spacing:-0.16px;">JSON</span>
<svg style="left:2910px;top:1170px;" width="14" height="22" viewBox="0 0 14 22" fill="none"><path d="M3.500 8.300l3.500-3.500 3.500 3.500M3.500 13.700l3.500 3.500 3.500-3.500" stroke="#dcdcdc" stroke-width="2" stroke-linecap="round" stroke-linejoin="round"/></svg>
<svg style="left:2950.75px;top:1166.25px;" width="27.5" height="27.5" viewBox="0 0 27.5 27.5" fill="none"><circle cx="13.75" cy="13.75" r="11.9" stroke="#9c9c9c" stroke-width="1.7"/><path d="M5.845 9.415h15.81M8.65 14.26h10.2M11.455 18.85h4.59" stroke="#9c9c9c" stroke-width="1.7" stroke-linecap="round"/></svg>
<div style="left:1779px;top:1209px;width:1213px;height:2px;background:#323232;"></div>
<div style="left:1903px;top:1214px;width:1084px;height:31.500px;box-sizing:border-box;border:2px solid #2a2a2a;background:#1f1f1f"></div>
<div style="left:2962px;top:1211px;width:1.5px;height:599px;background:#2c2c2c;"></div>
<div style="left:1903.2px;top:1245.5px;width:1.6px;height:144.5px;background:#404040;"></div>
<div style="left:1931.8px;top:1282px;width:1.6px;height:71.6px;background:#404040;"></div>
<span style="left:1837.1px;top:1213px;font-size:23.5px;line-height:31px;color:#dadada;font-family:'DejaVu Sans Mono', monospace;-webkit-text-stroke:0.2px;">1</span>
<span style="left:1837.1px;top:1249px;font-size:23.5px;line-height:31px;color:#8a8a8a;font-family:'DejaVu Sans Mono', monospace;-webkit-text-stroke:0.2px;">2</span>
<span style="left:1837.1px;top:1284px;font-size:23.5px;line-height:31px;color:#8a8a8a;font-family:'DejaVu Sans Mono', monospace;-webkit-text-stroke:0.2px;">3</span>
<span style="left:1837.1px;top:1320px;font-size:23.5px;line-height:31px;color:#8a8a8a;font-family:'DejaVu Sans Mono', monospace;-webkit-text-stroke:0.2px;">4</span>
<span style="left:1837.1px;top:1356px;font-size:23.5px;line-height:31px;color:#8a8a8a;font-family:'DejaVu Sans Mono', monospace;-webkit-text-stroke:0.2px;">5</span>
<span style="left:1837.1px;top:1392px;font-size:23.5px;line-height:31px;color:#8a8a8a;font-family:'DejaVu Sans Mono', monospace;-webkit-text-stroke:0.2px;">6</span>
<svg style="left:1869px;top:1220.5px;" width="24" height="16" viewBox="0 0 24 16" fill="none"><path d="M2.500 3.500l9.500 9.300 9.500-9.300" stroke="#c8c8c8" stroke-width="2" stroke-linecap="round" stroke-linejoin="round"/></svg>
<svg style="left:1869px;top:1256.3px;" width="24" height="16" viewBox="0 0 24 16" fill="none"><path d="M2.500 3.500l9.500 9.300 9.500-9.300" stroke="#c8c8c8" stroke-width="2" stroke-linecap="round" stroke-linejoin="round"/></svg>
<span style="left:1904.0px;top:1213px;font-size:23.5px;line-height:31px;color:#f9d849;font-family:'DejaVu Sans Mono', monospace;-webkit-text-stroke:0.2px;">[</span>
<span style="left:1930.4px;top:1249px;font-size:23.5px;line-height:31px;color:#da70d6;font-family:'DejaVu Sans Mono', monospace;letter-spacing:0.3px;-webkit-text-stroke:0.2px;">{</span>
<span style="left:1959.3px;top:1284px;font-size:23.5px;line-height:31px;color:#9cdcfe;font-family:'DejaVu Sans Mono', monospace;letter-spacing:0.3px;-webkit-text-stroke:0.2px;">"type"</span>
<span style="left:2046.0px;top:1284px;font-size:23.5px;line-height:31px;color:#d4d4d4;font-family:'DejaVu Sans Mono', monospace;letter-spacing:0.3px;-webkit-text-stroke:0.2px;">:</span>
<span style="left:2074.9px;top:1284px;font-size:23.5px;line-height:31px;color:#ce9178;font-family:'DejaVu Sans Mono', monospace;letter-spacing:0.3px;-webkit-text-stroke:0.2px;">"string_"</span>
<span style="left:2204.9px;top:1284px;font-size:23.5px;line-height:31px;color:#d4d4d4;font-family:'DejaVu Sans Mono', monospace;letter-spacing:0.3px;-webkit-text-stroke:0.2px;">,</span>
<span style="left:1959.3px;top:1320px;font-size:23.5px;line-height:31px;color:#9cdcfe;font-family:'DejaVu Sans Mono', monospace;letter-spacing:0.3px;-webkit-text-stroke:0.2px;">"string_"</span>
<span style="left:2089.3px;top:1320px;font-size:23.5px;line-height:31px;color:#d4d4d4;font-family:'DejaVu Sans Mono', monospace;letter-spacing:0.3px;-webkit-text-stroke:0.2px;">:</span>
<span style="left:2118.2px;top:1320px;font-size:23.5px;line-height:31px;color:#ce9178;font-family:'DejaVu Sans Mono', monospace;letter-spacing:0.3px;-webkit-text-stroke:0.2px;">"LSX II"</span>
<span style="left:1930.4px;top:1356px;font-size:23.5px;line-height:31px;color:#da70d6;font-family:'DejaVu Sans Mono', monospace;letter-spacing:0.3px;-webkit-text-stroke:0.2px;">}</span>
<span style="left:1902.5px;top:1392px;font-size:23.5px;line-height:31px;color:#f9d849;font-family:'DejaVu Sans Mono', monospace;-webkit-text-stroke:0.2px;">]</span>
<div style="left:564px;top:1809.5px;width:2428px;height:1.8px;background:#2e2e2e;"></div>
<div style="left:575.7px;top:1823px;width:120.4px;height:48px;background:#2e2e2e;border-radius:12px;"></div>
<div style="left:712px;top:1823px;width:120.4px;height:48px;background:#2e2e2e;border-radius:12px;"></div>
<div style="left:848px;top:1823px;width:184.1px;height:48px;background:#2e2e2e;border-radius:12px;"></div>
<span style="left:604.9px;top:1831px;font-size:26.2px;line-height:34px;color:#e2e2e2;letter-spacing:-0.02px;">Clear</span>
<span style="left:743.2px;top:1831px;font-size:26.2px;line-height:34px;color:#e2e2e2;letter-spacing:0.2px;">Filter</span>
<span style="left:870.9px;top:1831px;font-size:26.2px;line-height:34px;color:#e2e2e2;letter-spacing:0.42px;">Auto Select</span>
<span style="left:1607.7px;top:1831px;font-size:25.6px;line-height:33px;color:#9e9e9e;letter-spacing:0.52px;">1/516 rows selected</span>
<div style="left:2437.3px;top:1845.6px;width:4.4px;height:4.4px;background:#a4a4a4;border-radius:2.2px;"></div>
<span style="left:2452.9px;top:1833px;font-size:21.4px;line-height:28px;color:#a4a4a4;letter-spacing:-0.3px;">159 MB</span>
<span style="left:2533.0px;top:1834px;font-size:20.5px;line-height:27px;color:#a4a4a4;font-family:'DejaVu Sans', sans-serif;-webkit-text-stroke:0.2px;">↑</span>
<span style="left:2555.8px;top:1833px;font-size:21.4px;line-height:28px;color:#a4a4a4;letter-spacing:-0.47px;">13 KB/s</span>
<span style="left:2635.4px;top:1834px;font-size:20.5px;line-height:27px;color:#a4a4a4;font-family:'DejaVu Sans', sans-serif;-webkit-text-stroke:0.2px;">↓</span>
<span style="left:2658.7px;top:1833px;font-size:21.4px;line-height:28px;color:#a4a4a4;letter-spacing:-0.47px;">15 KB/s</span>
<div style="left:2740px;top:1827.8px;width:216.2px;height:34.4px;background:#a2a2a2;border-radius:17.2px;"></div>
<span style="left:2753.0px;top:1833px;font-size:21.6px;line-height:28px;color:#232323;font-weight:700;letter-spacing:0.56px;-webkit-text-stroke:0.15px;">Proxy Overridden</span>
</div></body></html>
